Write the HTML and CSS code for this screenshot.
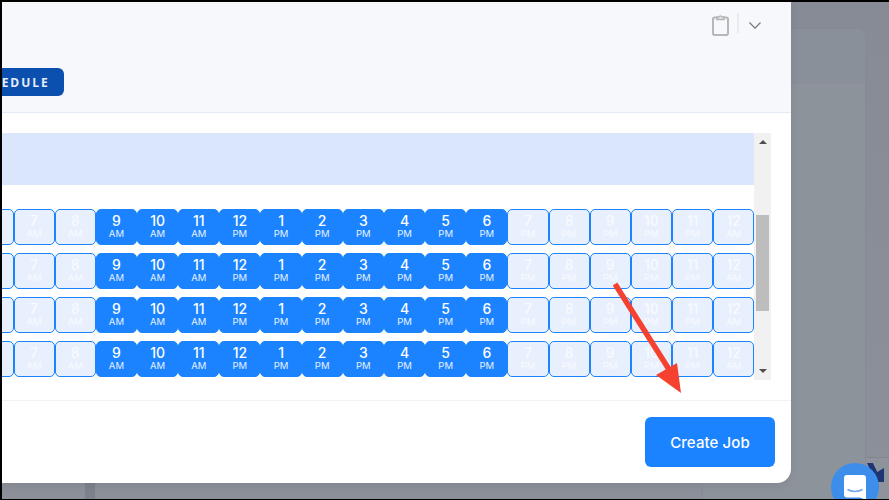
FILE: index.html
```html
<!DOCTYPE html>
<html lang="en">
<head>
<meta charset="UTF-8">
<meta name="viewport" content="width=device-width, initial-scale=1.0">
<title>Create Job</title>
<link rel="stylesheet" href="styles.css">
</head>
<body>

<div class="page">
    <div class="bg-strip"></div>
    <div class="bg-card">
        <div class="bg-card-head"></div>
    </div>
    <div class="bg-corner"></div>
    <div class="bg-badge"></div>

    <div class="modal">
        <div class="modal-head">
            <div class="head-tools">
                <svg class="clip-icon" width="17" height="22" viewBox="0 0 17 22" fill="none" stroke="#b6b7b8" stroke-width="2">
                    <rect x="1" y="3.6" width="15" height="17.4" rx="1.8"/>
                    <path d="M5 5.4V3h2a1.6 1.6 0 0 1 3 0h2v2.4H5z" fill="#f6f8fc" stroke-width="1.6"/>
                </svg>
                <span class="head-divider"></span>
                <svg class="chevron" width="12" height="7" viewBox="0 0 12 7" fill="none" stroke="#77797d" stroke-width="1.2">
                    <path d="M0.5 0.5L6 6.2l5.5-5.7"/>
                </svg>
            </div>
            <button class="schedule-button">SCHEDULE</button>
        </div>

        <div class="modal-body">
            <div class="scroll-area">
                <div class="banner"></div>
                <div class="slot-rows" id="slotRows"></div>
            </div>
            <div class="scrollbar">
                <span class="arrow-up"></span>
                <span class="thumb"></span>
                <span class="arrow-down"></span>
            </div>
        </div>

        <div class="modal-foot">
            <button class="create-button">Create Job</button>
        </div>
    </div>

    <svg class="red-arrow" width="80" height="120" viewBox="0 0 80 120">
        <path d="M2 2L57 89" stroke="#f5412f" stroke-width="5.5" fill="none"/>
        <path d="M68 111L43 93L64 81z" fill="#f5412f"/>
    </svg>

    <div class="chat-bubble">
        <svg width="22" height="25" viewBox="0 0 22 25">
            <path d="M3 0h16a3 3 0 0 1 3 3v22l-6-2.5H3a3 3 0 0 1-3-3V3a3 3 0 0 1 3-3z" fill="#fff"/>
            <path d="M3.5 14.5c4 2.6 11 2.6 15 0" fill="none" stroke="#6fa8ee" stroke-width="1.5"/>
        </svg>
    </div>
</div>

<script>
    const slots = [
        ["6", "AM", 0], ["7", "AM", 0], ["8", "AM", 0],
        ["9", "AM", 1], ["10", "AM", 1], ["11", "AM", 1], ["12", "PM", 1],
        ["1", "PM", 1], ["2", "PM", 1], ["3", "PM", 1], ["4", "PM", 1],
        ["5", "PM", 1], ["6", "PM", 1],
        ["7", "PM", 0], ["8", "PM", 0], ["9", "PM", 0], ["10", "PM", 0],
        ["11", "PM", 0], ["12", "AM", 0]
    ];
    const slotRows = document.getElementById('slotRows');

    for (let r = 0; r < 4; r++) {
        const row = document.createElement('div');
        row.className = 'slot-row';
        slots.forEach(s => {
            const cell = document.createElement('div');
            cell.className = s[2] ? 'slot active' : 'slot';
            cell.innerHTML = '<b>' + s[0] + '</b><small>' + s[1] + '</small>';
            row.appendChild(cell);
        });
        slotRows.appendChild(row);
    }
</script>

</body>
</html>
```

FILE: styles.css
```css
* {
    box-sizing: border-box;
}

body {
    margin: 0;
    font-family: Inter, Arial, sans-serif;
    overflow: hidden;
}

.page {
    position: relative;
    width: 889px;
    height: 500px;
    overflow: hidden;
    background-color: #8a8f99;
    background-image: linear-gradient(#868b95, #8b9099);
    border-top: 2px solid #000;
    border-left: 2px solid #000;
    border-bottom: 1px solid #000;
}

/* things behind the dim layer */
.bg-strip {
    position: absolute;
    left: 83px;
    top: 0;
    width: 10px;
    height: 100%;
    background-color: #7c818c;
}

.bg-card {
    position: absolute;
    left: 700px;
    top: 26px;
    width: 164px;
    height: 480px;
    border: 1px solid #858a94;
    border-radius: 8px;
    background-color: #8d939b;
}

.bg-card-head {
    height: 56px;
    background-color: #899099;
    border-bottom: 1px solid #8e939c;
    border-radius: 8px 8px 0 0;
}

.bg-corner {
    position: absolute;
    left: 864px;
    top: 455px;
    width: 25px;
    height: 45px;
    background-color: #8f949c;
    border-top: 1px solid #82878f;
}

.bg-badge {
    position: absolute;
    left: 865px;
    top: 461px;
    width: 17px;
    height: 19px;
    background-color: #1d3575;
    clip-path: polygon(0 0, 35% 0, 60% 47%, 100% 26%, 100% 100%, 50% 100%);
}

.modal {
    position: absolute;
    left: 0;
    top: 0;
    width: 789px;
    height: 481px;
    display: flex;
    flex-direction: column;
    background-color: #fff;
    border-radius: 0 0 14px 0;
    overflow: hidden;
    box-shadow: 0 2px 10px rgba(0, 0, 0, 0.08);
}

.modal-head {
    height: 111px;
    flex: none;
    background-color: #f6f8fc;
    border-bottom: 1px solid #e4eaf3;
}

.head-tools {
    display: flex;
    align-items: center;
    justify-content: flex-end;
    padding: 11px 30px 0 0;
}

.clip-icon {
    margin-right: 8px;
}

.head-divider {
    width: 2px;
    height: 20px;
    background-color: #e6ebf4;
    margin: 0 10px 4px 0;
}

.chevron {
    margin-top: 1px;
}

.schedule-button {
    display: block;
    margin: 31px 0 0 -38px;
    height: 28px;
    width: 100px;
    padding: 0 6px 0 0;
    border: none;
    border-radius: 6px;
    background-color: #0b50af;
    color: #e8eefa;
    font-family: "Open Sans", sans-serif;
    font-weight: 700;
    font-size: 12px;
    letter-spacing: 2px;
    text-align: center;
}

.modal-body {
    display: flex;
    flex: none;
    height: 247px;
    margin-top: 20px;
    padding-right: 20px;
}

.scroll-area {
    width: 752px;
    flex: none;
    overflow: hidden;
}

.banner {
    height: 52px;
    background-color: #dae6fc;
}

.slot-rows {
    display: flex;
    flex-direction: column;
    gap: 8px;
    margin: 24px 0 0 -29.65px;
}

.slot-row {
    display: flex;
    width: 781.85px;
}

.slot {
    flex: 1;
    height: 36px;
    padding-bottom: 2px;
    display: flex;
    flex-direction: column;
    align-items: center;
    justify-content: center;
    border: 1.5px solid #1b83fb;
    border-radius: 5px;
    background-color: #e9f0fd;
}

.slot b {
    font-size: 14px;
    font-weight: 500;
    line-height: 15px;
    color: #f8faff;
}

.slot small {
    font-size: 9.5px;
    font-weight: 400;
    line-height: 11px;
    color: #f8faff;
}

.slot.active {
    background-color: #1b83ff;
}

.slot.active b {
    color: #fff;
}

.slot.active small {
    color: #e8f2ff;
}

.scrollbar {
    width: 17px;
    flex: none;
    background-color: #f1f1f1;
    position: relative;
}

.thumb {
    position: absolute;
    left: 2px;
    top: 82px;
    width: 13px;
    height: 96px;
    background-color: #bdbdbd;
}

.arrow-up,
.arrow-down {
    position: absolute;
    left: 4.5px;
    width: 0;
    height: 0;
    border-left: 4px solid transparent;
    border-right: 4px solid transparent;
}

.arrow-up {
    top: 7px;
    border-bottom: 4px solid #505050;
}

.arrow-down {
    bottom: 7px;
    border-top: 4px solid #505050;
}

.modal-foot {
    flex: 1;
    margin-top: 20px;
    border-top: 1px solid #f0f2f6;
    padding: 16px;
    display: flex;
    justify-content: flex-end;
}

.create-button {
    width: 130px;
    height: 50px;
    border: none;
    border-radius: 6px;
    background-color: #1b83ff;
    color: #fff;
    font-family: Inter, Arial, sans-serif;
    font-weight: 500;
    font-size: 15px;
    letter-spacing: 0.1px;
}

.red-arrow {
    position: absolute;
    left: 611px;
    top: 280px;
}

.chat-bubble {
    position: absolute;
    left: 829px;
    top: 461px;
    width: 48px;
    height: 48px;
    border-radius: 50%;
    background-color: #3c8eea;
    padding: 12px 0 0 13px;
}
```
